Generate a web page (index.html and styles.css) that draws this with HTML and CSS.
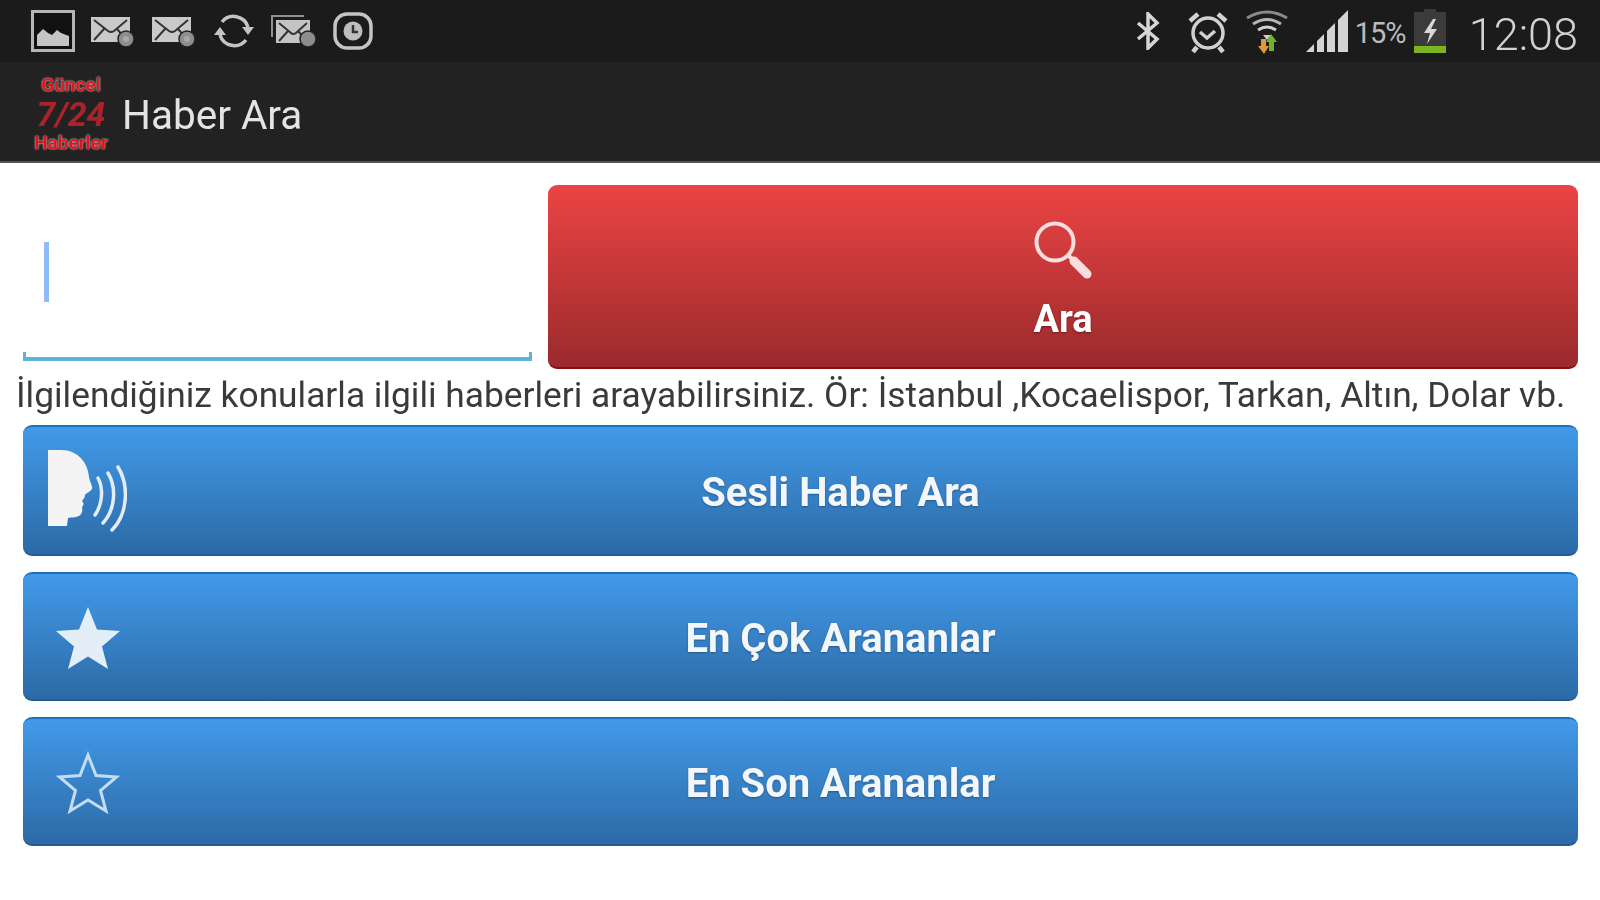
FILE: index.html
```html
<!DOCTYPE html>
<html lang="tr">
<head>
  <meta charset="UTF-8">
  <title>Haber Ara</title>
  <link rel="stylesheet" href="styles.css">
</head>
<body>
  <svg class="defs" width="0" height="0">
    <symbol id="mail" viewBox="0 0 45 31">
      <rect x="0" y="1" width="39" height="25" fill="#c9c9c9"/>
      <path d="M3 4l14 11q3 2 6 0L36 4M3 24l10-11M36 24L26 13" fill="none" stroke="#333" stroke-width="2"/>
      <circle cx="35" cy="23" r="8" fill="#8d8d8d" stroke="#222" stroke-width="1.5"/>
      <circle cx="35" cy="23" r="3" fill="#a8a8a8"/>
    </symbol>
  </svg>

  <div class="page">
    <!-- Status bar -->
    <div class="status-bar">
      <div class="status-left">
        <svg class="ic" width="44" height="42" viewBox="0 0 44 42">
          <rect x="1.500" y="1.500" width="41" height="39" fill="#111" stroke="#b5b5b5" stroke-width="3"/>
          <path d="M6 36V25l6-6 5 4 4 2 5-5 4 3 8 3v10z" fill="#c4c4c4"/>
        </svg>
        <svg class="ic" width="45" height="31"><use href="#mail"/></svg>
        <svg class="ic" width="45" height="31"><use href="#mail"/></svg>
        <svg class="ic" width="42" height="38" viewBox="0 0 42 38">
          <path d="M9 10A15 15 0 0 1 35 15M33 28A15 15 0 0 1 7 23" fill="none" stroke="#c4c4c4" stroke-width="3.500"/>
          <path d="M29 15h12l-6 8zM1 23h12l-6-8z" fill="#c4c4c4"/>
        </svg>
        <svg class="ic" width="46" height="33" viewBox="0 0 46 33">
          <path d="M1 22V1h32" fill="none" stroke="#8f8f8f" stroke-width="2"/>
          <rect x="5" y="5" width="34" height="23" fill="#c4c4c4"/>
          <path d="M8 8l12 10q2 2 5 0L36 8M8 26l9-10M36 26l-9-10" fill="none" stroke="#333" stroke-width="2"/>
          <circle cx="37" cy="24" r="8" fill="#8d8d8d" stroke="#222" stroke-width="1.500"/>
        </svg>
        <svg class="ic" width="40" height="38" viewBox="0 0 40 38">
          <rect x="2" y="2" width="36" height="34" rx="12" fill="none" stroke="#c4c4c4" stroke-width="3.500"/>
          <circle cx="20" cy="19" r="9.500" fill="#bdbdbd"/>
          <path d="M20 13v7h5" fill="none" stroke="#333" stroke-width="2.500"/>
        </svg>
      </div>
      <div class="status-right">
        <svg class="ic bt" width="26" height="38" viewBox="0 0 26 38" fill="none" stroke="#d6d6d6" stroke-width="3.500">
          <path d="M3 11l19 16-9 9V2l9 9L3 27"/>
        </svg>
        <svg class="ic alarm" width="42" height="43" viewBox="0 0 42 43" fill="none" stroke="#d0d0d0" stroke-width="3.500">
          <circle cx="21" cy="23" r="15"/>
          <path d="M13 22l7 6 8-7"/>
          <path d="M3 11l8-7M39 11l-8-7M10 37l-4 5M32 37l4 5" stroke-width="4.500"/>
        </svg>
        <svg class="ic wifi" width="44" height="45" viewBox="0 0 44 45" fill="none" stroke="#8a8a8a" stroke-width="3">
          <path d="M2 9Q22-3 42 9"/>
          <path d="M8 15Q22 6 36 15" stroke="#b5b5b5"/>
          <path d="M13 21Q22 15 31 21" stroke="#d0d0d0"/>
          <path d="M18 26h8l-4 5z" fill="#d0d0d0" stroke="none"/>
          <path d="M16 30h5v7h3l-5 8-6-8h3z" fill="#e0983c" stroke="none"/>
          <path d="M26 25l6 8h-3v9h-5v-9h-3z" fill="#6fb52c" stroke="none"/>
        </svg>
        <svg class="ic signal" width="43" height="42" viewBox="0 0 43 42" fill="#d4d4d4">
          <path d="M0 42l8-8v8zM11 31l7-7v18h-7zM21 21l8-8v29h-8zM32 10l10-10v42H32z"/>
        </svg>
        <span class="battery-pct">15%</span>
        <svg class="ic battery" width="32" height="44" viewBox="0 0 32 44">
          <path d="M10 0h12v3h10v41H0V3h10z" fill="#3b3b3b"/>
          <path d="M19 10l-9 14h6l-3 11 10-15h-6l5-10z" fill="#d8d8d8"/>
          <rect y="37" width="32" height="7" fill="#7bb524"/>
        </svg>
        <span class="clock">12:08</span>
      </div>
    </div>

    <!-- Action bar -->
    <div class="action-bar">
      <div class="logo">
        <span class="logo-small">Güncel</span>
        <span class="logo-big">7/24</span>
        <span class="logo-small">Haberler</span>
      </div>
      <span class="action-title">Haber Ara</span>
    </div>

    <div class="content">
      <div class="search-row">
        <div class="search-input">
          <div class="caret"></div>
          <div class="underline"></div>
        </div>
        <button class="btn-red">
          <svg width="58" height="58" viewBox="0 0 58 58" fill="none" stroke="#f8dede">
            <circle cx="21" cy="21" r="18.500" stroke-width="4"/>
            <path d="M35 35l3 3" stroke-width="4"/>
            <path d="M40 40l13 13" stroke-width="9" stroke-linecap="round"/>
          </svg>
          <span>Ara</span>
        </button>
      </div>

      <p class="hint">İlgilendiğiniz konularla ilgili haberleri arayabilirsiniz. Ör: İstanbul ,Kocaelispor, Tarkan, Altın, Dolar vb.</p>

      <div class="blue-buttons">
        <button class="btn-blue first">
          <span class="btn-icon">
            <svg width="80" height="82" viewBox="0 0 80 82">
              <path d="M1 0H14C31 0 41 13 42 27C43 33 46 36 45 39C43 42 39 43 38 45C38 48 36 49 35 51C37 53 37 55 35 57C36 60 35 64 32 66C28 68 24 67 21 68L20 76H1Z" fill="#f4f4f4"/>
              <g fill="none" stroke="#e3ecf5" stroke-width="3.500" stroke-linecap="round">
                <path d="M51 28C57 39 55 55 48 65"/>
                <path d="M61 23C70 38 68 60 56 73"/>
                <path d="M71 17C83 37 80 65 65 80"/>
              </g>
            </svg>
          </span>
          <span class="btn-label">Sesli Haber Ara</span>
        </button>
        <button class="btn-blue">
          <span class="btn-icon star">
            <svg width="66" height="64" viewBox="0 0 66 64"><path d="M33 1l9 22.500 23 1.500-18 15.500 6 22.500-20-12.500-20 12.500 6-22.500L1 25l23-1.500z" fill="#e3eef8"/></svg>
          </span>
          <span class="btn-label">En Çok Arananlar</span>
        </button>
        <button class="btn-blue">
          <span class="btn-icon star">
            <svg width="66" height="64" viewBox="0 0 66 64"><path d="M33 4l8 20.500 20.500 1.500-16 13.500 5.500 20.500-18-11-18 11 5.500-20.500-16-13.500L25 24.500z" fill="none" stroke="#c4dcf2" stroke-width="3"/></svg>
          </span>
          <span class="btn-label">En Son Arananlar</span>
        </button>
      </div>
    </div>
  </div>
</body>
</html>
```

FILE: styles.css
```css
body {
  margin: 0;
  background: #fff;
  font-family: Roboto, "Liberation Sans", sans-serif;
  overflow: hidden;
}

/* the screenshot is an upscaled phone capture, so everything is a bit soft */
.page {
  filter: blur(0.7px);
}

.defs {
  position: absolute;
}

.ic {
  display: block;
  flex: none;
}

/* Status bar */
.status-bar {
  height: 62px;
  background: #1b1b1b;
  display: flex;
  justify-content: space-between;
  align-items: center;
  padding: 0 22px 0 31px;
}

.status-left {
  display: flex;
  align-items: center;
  gap: 16px;
}

.status-right {
  display: flex;
  align-items: center;
  color: #d2d2d2;
}

.alarm {
  margin-left: 26px;
}

.wifi {
  margin-left: 16px;
}

.signal {
  margin-left: 17px;
}

.battery-pct {
  margin: 4px 0 0 6px;
  width: 56px;
  font-size: 29px;
  letter-spacing: -1px;
  color: #bbb;
}

.battery {
  margin-left: 3px;
}

.clock {
  margin: 6px 0 0 23px;
  font-size: 45px;
  font-weight: 300;
}

/* Action bar */
.action-bar {
  height: 99px;
  background: #222;
  border-bottom: 2px solid #555;
  display: flex;
  align-items: center;
  padding-left: 33px;
}

.logo {
  width: 76px;
  margin-top: 4px;
  display: flex;
  flex-direction: column;
  align-items: center;
  color: #e0141c;
  font-weight: bold;
  text-shadow: 0 0 2px #fff;
}

.logo-small {
  font-size: 19px;
  line-height: 22px;
}

.logo-big {
  font-size: 34px;
  line-height: 36px;
  font-style: italic;
  color: #a8242a;
  text-shadow: none;
}

.action-title {
  margin: 6px 0 0 13px;
  font-size: 40.5px;
  color: #e4e4e4;
}

/* Content */
.content {
  padding: 22px 22px 0 23px;
}

.search-row {
  display: flex;
  gap: 16px;
}

.search-input {
  width: 509px;
  height: 177px;
  display: flex;
  flex-direction: column;
  justify-content: flex-end;
}

.caret {
  width: 5px;
  height: 60px;
  margin: 0 0 50px 21px;
  background: #8fbcf8;
}

.underline {
  height: 5px;
  margin-bottom: 1px;
  border: 3px solid #5db4d8;
  border-top: none;
  border-bottom-width: 4px;
}

.btn-red {
  flex: 1;
  height: 184px;
  border: none;
  border-bottom: 2px solid #8a1010;
  border-radius: 9px;
  background: linear-gradient(#ec4444, #9a2a2c);
  color: #fff;
  font-family: inherit;
  font-size: 38px;
  font-weight: bold;
  text-shadow: 0 1px 2px rgba(0, 0, 0, 0.4);
  display: flex;
  flex-direction: column;
  align-items: center;
  justify-content: center;
  gap: 18px;
  padding: 9px 0 0;
}

.hint {
  margin: 0 -7px;
  height: 56px;
  line-height: 52px;
  font-size: 35.3px;
  color: #3a3a3a;
  white-space: nowrap;
}

.blue-buttons {
  display: flex;
  flex-direction: column;
  gap: 16px;
}

.btn-blue {
  height: 129px;
  border: none;
  border-top: 2px solid #1c71bd;
  border-bottom: 2px solid #1f5d97;
  border-radius: 9px;
  background: linear-gradient(#429ae9, #2c6aa6);
  color: #f4f7fa;
  font-family: inherit;
  font-size: 40px;
  font-weight: bold;
  text-shadow: 0 1px 2px rgba(0, 0, 0, 0.3);
  display: flex;
  align-items: center;
  padding: 0 24px;
}

.btn-blue.first {
  height: 131px;
}

.btn-icon {
  width: 80px;
  display: flex;
  justify-content: center;
}

.star {
  margin-top: 2px;
  padding-left: 2px;
  box-sizing: border-box;
}

.btn-label {
  flex: 1;
  text-align: center;
  padding-top: 3px;
}
```
